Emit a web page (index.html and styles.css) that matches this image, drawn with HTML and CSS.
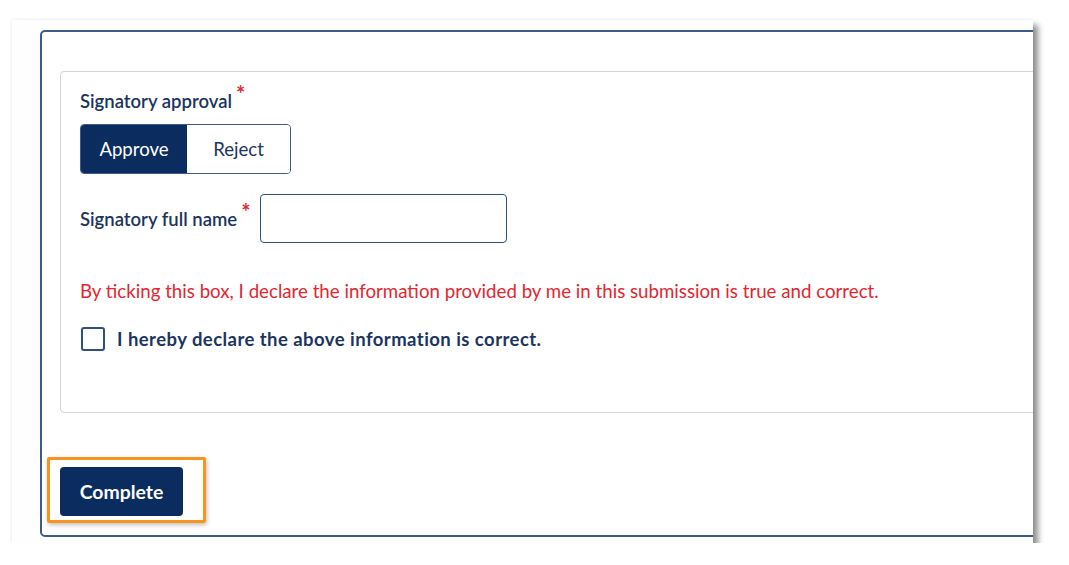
FILE: index.html
```html
<!DOCTYPE html>
<html lang="en">
<head>
<meta charset="utf-8">
<title>Signatory approval</title>
<link rel="stylesheet" href="styles.css">
</head>
<body>
<div class="card">
  <div class="frame">
    <div class="panel">
      <div class="label">Signatory approval<span class="req">*</span></div>
      <div class="toggle">
        <button class="opt active">Approve</button>
        <button class="opt">Reject</button>
      </div>
      <div class="name-row">
        <label class="label">Signatory full name<span class="req">*</span></label>
        <input class="text-input" type="text">
      </div>
      <p class="warning">By ticking this box, I declare the information provided by me in this submission is true and correct.</p>
      <div class="check-row">
        <span class="checkbox"></span>
        <span class="check-label">I hereby declare the above information is correct.</span>
      </div>
    </div>
    <div class="footer">
      <div class="highlight">
        <button class="complete">Complete</button>
      </div>
    </div>
  </div>
</div>
</body>
</html>
```

FILE: styles.css
```css
html, body {
  margin: 0;
  padding: 0;
  background: #ffffff;
  font-family: Lato, "Liberation Sans", sans-serif;
}

.card {
  margin: 20px 0 0 12px;
  width: 1021px;
  height: 523px;
  background: #fefefe;
  box-shadow: 5px 5px 6px rgba(0, 0, 0, 0.45), -1px -1px 3px rgba(0, 0, 0, 0.05);
  overflow: hidden;
  padding-top: 10px;
  box-sizing: border-box;
}

.frame {
  margin-left: 28px;
  width: 1100px;
  height: 507px;
  border: 2px solid #3b5b8c;
  border-radius: 5px;
  box-sizing: border-box;
  background: #ffffff;
}

.panel {
  margin: 39px 0 0 18px;
  height: 342px;
  border: 1.5px solid #d4d4d4;
  border-radius: 4px;
  box-sizing: border-box;
  padding: 18px 19px 0 19px;
}

.label {
  font-size: 18.5px;
  font-weight: 600;
  color: #1c355e;
  line-height: 22px;
}

.req {
  color: #e3262f;
  font-size: 22px;
  line-height: 0;
  vertical-align: 6px;
  margin-left: 4px;
  font-weight: 700;
}

.toggle {
  display: flex;
  margin-top: 12px;
  width: 211px;
  height: 50px;
  border: 1.5px solid #3b5b8c;
  border-radius: 4px;
  box-sizing: border-box;
  overflow: hidden;
}

.opt {
  border: none;
  background: #ffffff;
  color: #1c355e;
  font-family: Lato, "Liberation Sans", sans-serif;
  font-size: 18.6px;
  padding: 0;
  width: 104px;
}

.opt.active {
  width: 107px;
  background: #0b2c5e;
  color: #ffffff;
}

.name-row {
  display: flex;
  align-items: center;
  margin-top: 20px;
}

.name-row .label {
  width: 180px;
}

.text-input {
  width: 247px;
  height: 49px;
  box-sizing: border-box;
  border: 1.5px solid #2f4f7f;
  border-radius: 4px;
  font-family: Lato, "Liberation Sans", sans-serif;
  font-size: 16px;
  margin: 0;
}

.warning {
  margin: 37px 0 0 0;
  font-size: 18.7px;
  line-height: 22px;
  color: #e3262f;
}

.check-row {
  display: flex;
  align-items: center;
  gap: 12px;
  margin-top: 25px;
  padding-left: 1px;
}

.checkbox {
  width: 24px;
  height: 24px;
  border: 2px solid #2f4f7f;
  border-radius: 3px;
  box-sizing: border-box;
  background: #ffffff;
}

.check-label {
  font-size: 18.5px;
  font-weight: 700;
  letter-spacing: 0.45px;
  color: #1c355e;
}

.footer {
  margin: 44px 0 0 5px;
}

.highlight {
  display: inline-block;
  border: 3px solid #f7941d;
  border-radius: 2px;
  padding: 7px 20px 4px 10px;
  box-shadow: 1px 2px 4px rgba(0, 0, 0, 0.25);
}

.complete {
  display: block;
  width: 123px;
  height: 49px;
  border: none;
  border-radius: 4px;
  background: #0b2c5e;
  color: #ffffff;
  font-family: Lato, "Liberation Sans", sans-serif;
  font-size: 19.4px;
  font-weight: 700;
  padding: 0;
}
```
